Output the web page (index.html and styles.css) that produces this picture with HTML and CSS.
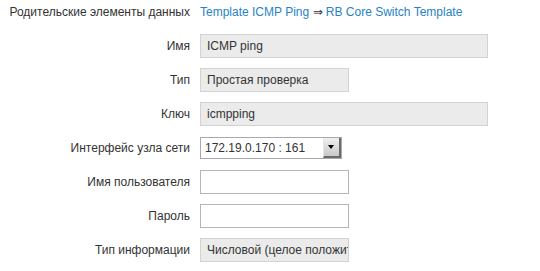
FILE: index.html
```html
<!DOCTYPE html>
<html lang="ru">
<head>
  <meta charset="UTF-8" />
  <title>Элемент данных</title>
  <link rel="stylesheet" href="styles.css">
</head>
<body>

  <!-- форма элемента данных -->
  <div class="form">

    <div class="row parent">
      <div class="label">Родительские элементы данных</div>
      <div class="field">
        <a href="#">Template ICMP Ping</a> &rArr; <a href="#">RB Core Switch Template</a>
      </div>
    </div>

    <div class="row">
      <div class="label">Имя</div>
      <div class="field"><div class="input readonly wide">ICMP ping</div></div>
    </div>

    <div class="row">
      <div class="label">Тип</div>
      <div class="field"><div class="input readonly">Простая проверка</div></div>
    </div>

    <div class="row">
      <div class="label">Ключ</div>
      <div class="field"><div class="input readonly wide">icmpping</div></div>
    </div>

    <div class="row">
      <div class="label">Интерфейс узла сети</div>
      <div class="field">
        <div class="select">
          <span class="value">172.19.0.170 : 161</span>
          <span class="arrow"></span>
        </div>
      </div>
    </div>

    <div class="row">
      <div class="label">Имя пользователя</div>
      <div class="field"><div class="input"></div></div>
    </div>

    <div class="row">
      <div class="label">Пароль</div>
      <div class="field"><div class="input"></div></div>
    </div>

    <div class="row">
      <div class="label">Тип информации</div>
      <div class="field"><div class="input readonly">Числовой (целое положительное)</div></div>
    </div>

  </div>
</body>
</html>
```

FILE: styles.css
```css
body {
  margin: 0;
  font-family: "Liberation Sans", Arial, sans-serif;
  font-size: 12px;
  color: #333;
  background: #fff;
}

/* вся форма */
.form {
  display: flex;
  flex-direction: column;
  gap: 10px;
}

/* строка: подпись + поле */
.row {
  display: flex;
  align-items: center;
  gap: 10px;
  height: 24px;
}

.label {
  width: 190px;
  text-align: right;
  white-space: nowrap;
  flex-shrink: 0;
}

.field {
  white-space: nowrap;
}

.field a {
  color: #2783c2;
  text-decoration: none;
}

/* поля ввода */
.input {
  box-sizing: border-box;
  width: 149px;
  height: 24px;
  border: 1px solid #b5b5b5;
  background: #fff;
  padding: 0 6px;
  line-height: 22px;
  white-space: nowrap;
  overflow: hidden;
}

.input.readonly {
  background: #ebebeb;
  border-color: #d3d3d3;
}

.input.wide {
  width: 288px;
}

/* выпадающий список */
.select {
  box-sizing: border-box;
  width: 142px;
  height: 22px;
  border: 1px solid #a9a9a9;
  display: flex;
  align-items: stretch;
  background: #fff;
}

.select .value {
  flex: 1;
  padding-left: 4px;
  line-height: 20px;
}

.select .arrow {
  width: 15px;
  position: relative;
  background: linear-gradient(#f0f0f0, #c8c8c8);
  border-right: 2px solid #6b6b6b;
  border-bottom: 2px solid #6b6b6b;
  border-left: 1px solid #e6e6e6;
}

.select .arrow::after {
  content: "";
  position: absolute;
  left: 4px;
  top: 7px;
  border-left: 3px solid transparent;
  border-right: 3px solid transparent;
  border-top: 4px solid #000;
}
```
